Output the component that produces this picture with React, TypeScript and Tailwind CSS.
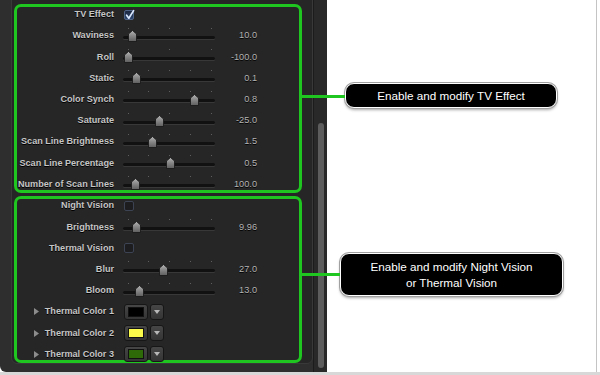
import React from 'react';

type SliderRow = { label: string; value: string; pos: number; ticks: number };

const tvRows: SliderRow[] = [
  { label: 'Waviness', value: '10.0', pos: 9.7, ticks: 5 },
  { label: 'Roll', value: '-100.0', pos: 5.3, ticks: 3 },
  { label: 'Static', value: '0.1', pos: 13, ticks: 5 },
  { label: 'Color Synch', value: '0.8', pos: 71, ticks: 5 },
  { label: 'Saturate', value: '-25.0', pos: 36.3, ticks: 3 },
  { label: 'Scan Line Brightness', value: '1.5', pos: 29.7, ticks: 5 },
  { label: 'Scan Line Percentage', value: '0.5', pos: 47, ticks: 5 },
  { label: 'Number of Scan Lines', value: '100.0', pos: 12, ticks: 5 },
];

const thermalColors = [
  { label: 'Thermal Color 1', color: 'bg-[#000000]' },
  { label: 'Thermal Color 2', color: 'bg-[#fbfb4c]' },
  { label: 'Thermal Color 3', color: 'bg-[#2f6a08]' },
];

const labelCls =
  "w-[97px] text-right text-[9.1px] font-bold text-[#c6c6c6] leading-none whitespace-nowrap [text-shadow:0_1px_0_#000]";
const valueCls = 'w-[42px] text-right text-[9.2px] text-[#b4b4b4] leading-none [text-shadow:0_1px_0_#000]';

const Thumb = () => (
  <svg width="9" height="12" viewBox="0 0 9 12">
    <defs>
      <linearGradient id="thumbGrad" x1="0" y1="0" x2="0" y2="1">
        <stop offset="0" stopColor="#b4b4b4" />
        <stop offset="0.45" stopColor="#8a8a8a" />
        <stop offset="1" stopColor="#5e5e5e" />
      </linearGradient>
    </defs>
    <path d="M4.5 0.5 L8.5 4 V11.5 H0.5 V4 Z" fill="url(#thumbGrad)" stroke="#141414" strokeWidth="0.8" />
  </svg>
);

const Slider = ({ pos, ticks }: { pos: number; ticks: number }) => (
  <div className="relative h-[21.2px] w-[92px]">
    <div className="absolute left-[4.5px] right-[3.5px] top-[2.5px] flex justify-between">
      {Array.from({ length: ticks }).map((_, i) => (
        <div key={i} className="w-[1px] h-[1px] bg-[#5e5e5e]" />
      ))}
    </div>
    <div className="absolute left-0 right-0 top-[10.5px] h-[3px] rounded-full bg-[#111111] shadow-[0_1px_0_#383838]" />
    <div className="absolute top-[4.6px] flex" style={{ left: pos - 4.5 }}>
      <Thumb />
    </div>
  </div>
);

const Checkbox = ({ checked }: { checked?: boolean }) =>
  checked ? (
    <div className="relative ml-[1px] w-[10px] h-[10px] rounded-[2px] border border-[#4f6487] bg-gradient-to-b from-[#1c2840] to-[#2e466f]">
      <svg className="absolute -left-[1px] -top-[2px]" width="12" height="12" viewBox="0 0 12 12">
        <path d="M2.6 6.2 L4.8 9.2 L9.6 1.6" fill="none" stroke="#dbe9ff" strokeWidth="1.7" strokeLinecap="round" strokeLinejoin="round" />
      </svg>
    </div>
  ) : (
    <div className="ml-[1px] w-[10px] h-[10px] rounded-[2px] border border-[#3c4352] bg-[#1d1d1f]" />
  );

const CheckRow = ({ label, checked, h }: { label: string; checked?: boolean; h: string }) => (
  <div className={`flex items-center ${h}`}>
    <div className={labelCls}>{label}</div>
    <div className="ml-[9px]">
      <Checkbox checked={checked} />
    </div>
  </div>
);

const SliderLine = ({ row }: { row: SliderRow }) => (
  <div className="flex items-center h-[21.2px]">
    <div className={labelCls}>{row.label}</div>
    <div className="ml-[9px]">
      <Slider pos={row.pos} ticks={row.ticks} />
    </div>
    <div className={valueCls}>{row.value}</div>
  </div>
);

const ColorRow = ({ label, color }: { label: string; color: string }) => (
  <div className="flex items-center h-[21.2px]">
    <div className={`${labelCls} flex items-center justify-end`}>
      <svg className="mr-[6px]" width="5" height="7" viewBox="0 0 5 7">
        <path d="M0 0 L5 3.5 L0 7 Z" fill="#8c8c8c" />
      </svg>
      <span>{label}</span>
    </div>
    <div className="ml-[10px] flex items-center gap-[2px]">
      <div className="w-[24px] h-[16px] rounded-[3px] border border-[#161616] bg-gradient-to-b from-[#464646] to-[#353535] flex items-center justify-center">
        <div className={`w-[16px] h-[10px] border border-[#111] ${color}`} />
      </div>
      <div className="w-[14px] h-[16px] rounded-[3px] border border-[#161616] bg-gradient-to-b from-[#464646] to-[#353535] flex items-center justify-center">
        <svg width="6" height="4" viewBox="0 0 6 4">
          <path d="M0 0 H6 L3 4 Z" fill="#b8b8b8" />
        </svg>
      </div>
    </div>
  </div>
);

export default function App() {
  return (
    <div className="relative w-[600px] h-[375px] bg-white flex flex-col overflow-hidden font-['Liberation_Sans',Arial,sans-serif]">
      <div className="flex h-[372px]">
        {/* inspector */}
        <div className="w-[327px] h-full bg-[#2e2e2e] rounded-bl-[6px] flex overflow-hidden">
          <div className="ml-[11px] w-[302px] h-[372px] -mt-[8px] pt-[11px] pl-[2px] bg-[#262626] border border-[#393939] rounded-[6px]">
            {/* TV effect group */}
            <div className="w-[288px] h-[189px] border-[3px] border-[#1fc61f] rounded-[7px]">
              <CheckRow label="TV Effect" checked h="h-[16px]" />
              <div className="mt-[2.4px]">
                {tvRows.map((r) => (
                  <SliderLine key={r.label} row={r} />
                ))}
              </div>
            </div>
            {/* night / thermal group */}
            <div className="mt-[3px] w-[288px] h-[167px] border-[3px] border-[#1fc61f] rounded-[7px]">
              <CheckRow label="Night Vision" h="h-[14px]" />
              <div className="mt-[3.6px]">
                <SliderLine row={{ label: 'Brightness', value: '9.96', pos: 13, ticks: 5 }} />
                <CheckRow label="Thermal Vision" h="h-[21.2px]" />
                <SliderLine row={{ label: 'Blur', value: '27.0', pos: 40.3, ticks: 5 }} />
                <SliderLine row={{ label: 'Bloom', value: '13.0', pos: 16.3, ticks: 5 }} />
                {thermalColors.map((c) => (
                  <ColorRow key={c.label} label={c.label} color={c.color} />
                ))}
              </div>
            </div>
          </div>
          {/* scrollbar */}
          <div className="w-[14px] h-full bg-[#292929] border-l border-[#1c1c1c] pl-[4px] pt-[123px]">
            <div className="w-[6px] h-[245px] rounded-full bg-[#5d5d5d]" />
          </div>
        </div>

        {/* annotation area */}
        <div className="w-[270px] h-full border-r border-[#c4c4c4] flex flex-col items-start">
          <div className="ml-[18px] mt-[83px] w-[212px] h-[25px] rounded-[9px] bg-black border border-white shadow-[0_0_0_1px_#a0a0a0,0_2px_3px_rgba(0,0,0,0.35)] flex items-center justify-center text-white text-[11.7px]">
            Enable and modify TV Effect
          </div>
          <div className="ml-[13px] mt-[145px] w-[223px] h-[43px] rounded-[9px] bg-black border border-white shadow-[0_0_0_1px_#a0a0a0,0_2px_3px_rgba(0,0,0,0.35)] flex flex-col items-center justify-center text-white text-[11.7px] leading-[15.7px] text-center">
            <span>Enable and modify Night Vision</span>
            <span>or Thermal Vision</span>
          </div>
        </div>
      </div>
      <div className="h-[3px] bg-[#d8d8d8]" />

      {/* connector lines */}
      <div className="absolute left-[302px] top-[95px] w-[43px] h-[3px] bg-[#1fc61f]" />
      <div className="absolute left-[302px] top-[273px] w-[38px] h-[3px] bg-[#1fc61f]" />
    </div>
  );
}
